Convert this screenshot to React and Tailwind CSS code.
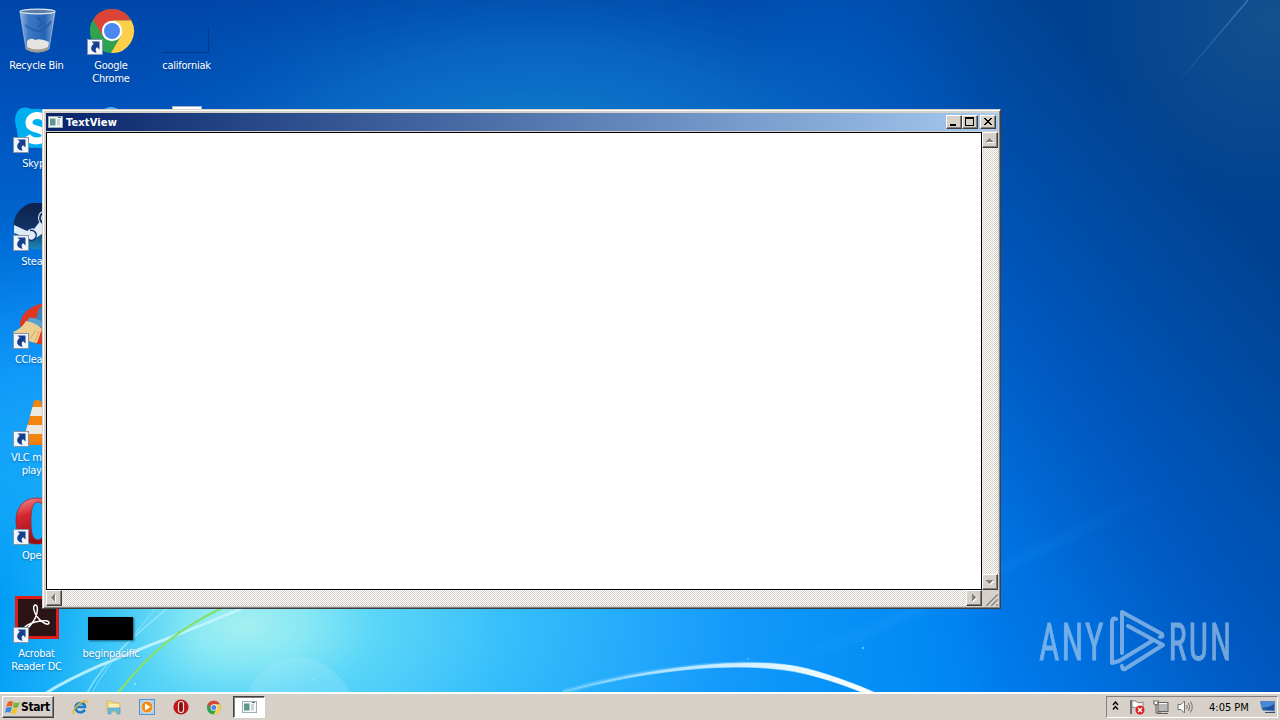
const raised = 'bg-[#d6d0c8] border border-t-white border-l-white border-r-[#404040] border-b-[#404040] shadow-[inset_-1px_-1px_0_#808080]';
const dither = 'bg-[repeating-conic-gradient(#ffffff_0_25%,#d6d0c8_0_50%)] bg-[length:2px_2px]';

function Wallpaper() {
  return (
    <svg className="absolute inset-0" width="1280" height="720" viewBox="0 0 1280 720">
      <defs>
        <linearGradient id="base" x1="0" y1="0" x2="0" y2="692" gradientUnits="userSpaceOnUse">
          <stop offset="0" stopColor="#0046a8" />
          <stop offset="0.15" stopColor="#0052bc" />
          <stop offset="0.35" stopColor="#0068d2" />
          <stop offset="0.65" stopColor="#0094ee" />
          <stop offset="1" stopColor="#00a0fa" />
        </linearGradient>
        <linearGradient id="right" x1="830" y1="650" x2="1300" y2="400" gradientUnits="userSpaceOnUse">
          <stop offset="0" stopColor="#0088f4" />
          <stop offset="0.2" stopColor="#0080f0" />
          <stop offset="0.4" stopColor="#0071e0" />
          <stop offset="0.7" stopColor="#0058c0" />
          <stop offset="1" stopColor="#004494" />
        </linearGradient>
        <linearGradient id="rightFade" x1="740" y1="0" x2="1000" y2="0" gradientUnits="userSpaceOnUse">
          <stop offset="0" stopColor="#fff" stopOpacity="0" />
          <stop offset="1" stopColor="#fff" />
        </linearGradient>
        <mask id="rightMask"><rect width="1280" height="720" fill="url(#rightFade)" /></mask>
        <linearGradient id="dark" x1="920" y1="420" x2="1200" y2="170" gradientUnits="userSpaceOnUse">
          <stop offset="0" stopColor="#0060cc" stopOpacity="0" />
          <stop offset="0.5" stopColor="#0052b2" stopOpacity="0.85" />
          <stop offset="1" stopColor="#004290" />
        </linearGradient>
        <radialGradient id="topGlow" cx="0" cy="0" r="1" gradientTransform="translate(540 150) scale(460 210)" gradientUnits="userSpaceOnUse">
          <stop offset="0" stopColor="#1280d0" />
          <stop offset="0.5" stopColor="#0a6cc4" stopOpacity="0.75" />
          <stop offset="1" stopColor="#0052b0" stopOpacity="0" />
        </radialGradient>
        <radialGradient id="cyan" cx="0" cy="0" r="1" gradientTransform="translate(245 625) scale(760 430)" gradientUnits="userSpaceOnUse">
          <stop offset="0" stopColor="#a4f0f0" />
          <stop offset="0.08" stopColor="#88e8f4" />
          <stop offset="0.17" stopColor="#5cd6f8" />
          <stop offset="0.36" stopColor="#34bdfb" />
          <stop offset="0.65" stopColor="#1499fb" />
          <stop offset="1" stopColor="#0080f0" stopOpacity="0" />
        </radialGradient>
        <linearGradient id="leftBlue" x1="0" y1="600" x2="200" y2="640" gradientUnits="userSpaceOnUse">
          <stop offset="0" stopColor="#009cf6" />
          <stop offset="0.35" stopColor="#10acf6" stopOpacity="0.8" />
          <stop offset="1" stopColor="#50d4f6" stopOpacity="0" />
        </linearGradient>
        <linearGradient id="leftFade" x1="0" y1="330" x2="0" y2="600" gradientUnits="userSpaceOnUse">
          <stop offset="0" stopColor="#fff" stopOpacity="0" />
          <stop offset="1" stopColor="#fff" />
        </linearGradient>
        <mask id="leftMask"><rect width="1280" height="720" fill="url(#leftFade)" /></mask>
        <linearGradient id="arc" x1="560" y1="0" x2="880" y2="0" gradientUnits="userSpaceOnUse">
          <stop offset="0" stopColor="#80d4ff" />
          <stop offset="0.6" stopColor="#d8f2ff" />
          <stop offset="1" stopColor="#fff" />
        </linearGradient>
        <linearGradient id="beam" x1="700" y1="0" x2="1180" y2="0" gradientUnits="userSpaceOnUse">
          <stop offset="0" stopColor="#2aa0ff" stopOpacity="0" />
          <stop offset="0.4" stopColor="#2aa0ff" />
          <stop offset="1" stopColor="#2aa0ff" stopOpacity="0" />
        </linearGradient>
        <linearGradient id="streak" x1="1250" y1="0" x2="1170" y2="85" gradientUnits="userSpaceOnUse">
          <stop offset="0" stopColor="#5088c0" />
          <stop offset="1" stopColor="#5088c0" stopOpacity="0" />
        </linearGradient>
        <radialGradient id="haze" cx="1270" cy="20" r="190" gradientUnits="userSpaceOnUse">
          <stop offset="0" stopColor="#30648c" stopOpacity="0.4" />
          <stop offset="1" stopColor="#30648c" stopOpacity="0" />
        </radialGradient>
        <filter id="soft" x="-20%" y="-20%" width="140%" height="140%"><feGaussianBlur stdDeviation="4" /></filter>
        <filter id="slight" x="-10%" y="-10%" width="120%" height="120%"><feGaussianBlur stdDeviation="0.7" /></filter>
      </defs>
      <rect width="1280" height="720" fill="url(#base)" />
      <rect width="1280" height="720" fill="url(#right)" mask="url(#rightMask)" />
      <rect width="1280" height="720" fill="url(#dark)" mask="url(#rightMask)" />
      <rect width="1280" height="370" fill="url(#topGlow)" />
      <rect width="1280" height="720" fill="url(#cyan)" />
      <rect width="220" height="720" fill="url(#leftBlue)" mask="url(#leftMask)" />
      <rect x="1060" width="220" height="220" fill="url(#haze)" />
      <path d="M1248 0L1180 80" stroke="url(#streak)" strokeWidth="1.5" opacity="0.7" filter="url(#slight)" />
      <path d="M660 706L860 635L1000 570L1180 480" fill="none" stroke="url(#beam)" strokeWidth="9" opacity="0.3" filter="url(#soft)" />
      <path d="M247 694C268 645 325 645 351 694" fill="#b8f0ff" opacity="0.2" />
      <g fill="none" filter="url(#slight)">
        <path d="M46 693C100 660 170 640 245 607" stroke="#c8f6ff" strokeWidth="3" opacity="0.85" />
        <path d="M87 693C105 660 135 635 168 608" stroke="#a8ecff" strokeWidth="1.5" opacity="0.7" />
        <path d="M92 693C112 656 134 638 155 608" stroke="#a8ecff" strokeWidth="1" opacity="0.6" />
        <path d="M118 693C150 652 180 628 222 608" stroke="#84e070" strokeWidth="2.4" />
      </g>
      <path d="M563 692C640 669 750 655 808 671Q842 681 870 693" fill="none" stroke="#90d8ff" strokeWidth="5" opacity="0.35" filter="url(#slight)" />
      <path d="M563 692C640 669 750 654 808 669C838 677 862 687 878 694H866C845 685 826 679 806 674C740 658 638 672 563 692Z" fill="url(#arc)" stroke="url(#arc)" strokeWidth="0.6" filter="url(#slight)" />
      <g fill="#a8e4ff" opacity="0.8">
        <circle cx="863" cy="648" r="1" /><circle cx="748" cy="659" r="0.8" />
        <circle cx="135" cy="684" r="1.2" /><circle cx="259" cy="629" r="1" /><circle cx="314" cy="679" r="1" />
      </g>
    </svg>
  );
}

function Shortcut() {
  return (
    <svg className="absolute left-0 bottom-0" width="16" height="16" viewBox="0 0 16 16">
      <rect x="0.5" y="0.5" width="15" height="15" fill="#f2f6fc" stroke="#8496ac" />
      <path d="M4.5 2.5H12.5V10.5L10.2 8.2C8.4 9 8.2 11 9.6 13.8C5 13.6 1.5 9 6.8 4.8Z" fill="#153f8c" />
    </svg>
  );
}

function ChromeLogo({ size }) {
  return (
    <svg width={size} height={size} viewBox="0 1 48 48">
      <circle cx="25" cy="25" r="22" fill="#2fa352" />
      <path d="M25 25L6 14A22 22 0 0 1 44.3 14.5H25Z" fill="#dc4437" />
      <path d="M44.3 14.5A22 22 0 0 1 24 47L34 30L25 14.5Z" fill="#fcd04a" />
      <path d="M6 14L16 31L25 25L26 14Z" fill="#dc4437" />
      <path d="M6 14L16.4 31L25 35L21 46.5A22 22 0 0 1 6 14Z" fill="#2fa352" />
      <circle cx="25" cy="25" r="10.2" fill="#fff" />
      <circle cx="25" cy="25" r="8" fill="#4a87ee" />
    </svg>
  );
}

function RecycleBin() {
  return (
    <svg width="48" height="48" viewBox="0 0 48 48">
      <defs>
        <linearGradient id="bin">
          <stop stopColor="#c8dcf0" stopOpacity="0.75" />
          <stop offset="0.25" stopColor="#6898d2" stopOpacity="0.6" />
          <stop offset="0.7" stopColor="#3c74bc" stopOpacity="0.6" />
          <stop offset="1" stopColor="#b4cce4" stopOpacity="0.8" />
        </linearGradient>
      </defs>
      <path d="M7 5L13 42Q24 48 36 42L42 5Z" fill="url(#bin)" stroke="#9cbade" strokeWidth="0.8" />
      <path d="M14 34Q18 30 22 33Q28 31 36 35L35 41Q24 46 14 41Z" fill="#e4e4e0" />
      <path d="M14 40Q24 45 35 40L35 43Q24 48 14 43Z" fill="#a09c94" />
      <path d="M12 18Q20 24 26 24Q34 22 38 14M24 10L30 16L25 20" fill="none" stroke="#2058a4" strokeWidth="2" opacity="0.7" />
      <ellipse cx="24.5" cy="4.5" rx="17.5" ry="2.4" fill="#5c7ea8" stroke="#dae4ee" strokeWidth="1.2" />
    </svg>
  );
}

function Skype() {
  return (
    <svg width="48" height="48" viewBox="0 0 48 48">
      <path d="M4 7Q9 0 18 4Q40 2 44 22Q48 40 34 44Q24 42 18 43Q4 38 4 25Q0 14 4 7Z" fill="#00aff0" />
      <path d="M33 16C30 8 17 9 16 17C15 27 33 22 32 31C31 37 18 38 14 31" fill="none" stroke="#fff" strokeWidth="7" />
    </svg>
  );
}

function Steam() {
  return (
    <svg width="48" height="48" viewBox="0 0 48 48">
      <defs>
        <linearGradient id="steam" x2="0" y2="1"><stop stopColor="#10204c" /><stop offset="0.55" stopColor="#103464" /><stop offset="1" stopColor="#1c88bc" /></linearGradient>
      </defs>
      <circle cx="24" cy="23" r="23.5" fill="url(#steam)" />
      <path d="M1 22L14 28Q19 24 21 26L28 17H36V26L23 35Q18 41 12 34L1 30Z" fill="#e0ebfa" />
      <path d="M14 35A5 5 0 1 0 17 27.5" fill="none" stroke="#10346a" strokeWidth="1.5" />
      <circle cx="33" cy="15" r="8" fill="#e0ebfa" />
      <circle cx="33" cy="15" r="6" fill="none" stroke="#10346a" strokeWidth="2" />
    </svg>
  );
}

function CCleaner() {
  return (
    <svg width="48" height="48" viewBox="0 0 48 48">
      <path d="M32 2Q10 6 7 22Q8 42 32 44V2Z" fill="#dc3822" />
      <path d="M26 8L32 2V24L21 24Z" fill="#3c84bc" />
      <path d="M16 17Q22 16 32 22V28Q22 24 14 21Z" fill="#58a2d2" />
      <path d="M13 20Q24 22 29 28L24 42Q10 40 0 31Q8 28 13 20Z" fill="#ecce90" />
      <path d="M17 38L23 29M22 40L26 30" stroke="#d4a868" />
    </svg>
  );
}

function Vlc() {
  return (
    <svg width="48" height="48" viewBox="0 0 48 48">
      <path d="M8 32H42L46 46H4Z" fill="#ec7c0c" />
      <path d="M21 2Q24 0 28 2L38 40Q24 46 11 40Z" fill="#f28410" />
      <path d="M19.5 8H29.5L31 17H17Z" fill="#eee9e0" />
      <path d="M14.5 26H34L36 35H12Z" fill="#eee9e0" />
    </svg>
  );
}

function Opera() {
  return (
    <svg width="48" height="48" viewBox="0 0 48 48">
      <defs><linearGradient id="opera" x2="0.3" y2="1"><stop stopColor="#f49496" /><stop offset="0.4" stopColor="#d42830" /><stop offset="1" stopColor="#980c14" /></linearGradient></defs>
      <path fillRule="evenodd" d="M24 1C10 1 3 11 3 24S10 47 24 47S45 37 45 24S38 1 24 1ZM25 5C31 5 32 15 32 24S31 43 25 43S18 34 18 24S19 5 25 5Z" fill="url(#opera)" stroke="#a81820" strokeWidth="0.7" />
    </svg>
  );
}

function Acrobat() {
  return (
    <svg width="48" height="48" viewBox="0 0 48 48">
      <rect x="2" y="1" width="44" height="43" fill="#e01c14" />
      <rect x="5" y="4" width="38" height="37" fill="#2a1416" />
      <path d="M22 10C26 9 25 21 19 28C14 35 10 36 12 32C17 27 36 23 36 28C35 32 25 25 22 18C20 13 20 11 22 10Z" fill="none" stroke="#fff" strokeWidth="1.5" />
    </svg>
  );
}

function DesktopIcon({ label, shortcut, children }) {
  return (
    <div className="flex flex-col items-center pt-[7px]">
      <div className="relative w-12 h-12">
        {children}
        {shortcut && <Shortcut />}
      </div>
      <p className="mt-1 w-[74px] text-center text-[11px] leading-[13px] tracking-[-0.25px] text-white whitespace-pre [text-shadow:0_1px_2px_#00307080]">{label}</p>
    </div>
  );
}

function Desktop() {
  return (
    <div className="relative grid grid-flow-col grid-cols-[73px_76px_75px] grid-rows-[repeat(7,98px)] h-[692px] w-[224px]">
      <DesktopIcon label="Recycle Bin"><RecycleBin /></DesktopIcon>
      <DesktopIcon label="Skype" shortcut><Skype /></DesktopIcon>
      <DesktopIcon label="Steam" shortcut><Steam /></DesktopIcon>
      <DesktopIcon label="CCleaner" shortcut><CCleaner /></DesktopIcon>
      <DesktopIcon label={'VLC media\nplayer'} shortcut><Vlc /></DesktopIcon>
      <DesktopIcon label="Opera" shortcut><Opera /></DesktopIcon>
      <DesktopIcon label={'Acrobat\nReader DC'} shortcut><Acrobat /></DesktopIcon>
      <DesktopIcon label={'Google\nChrome'} shortcut><ChromeLogo size={48} /></DesktopIcon>
      <div className="flex justify-center pt-[9px]"><div className="w-6 h-6 rounded-full bg-[#58acec]" /></div>
      <div className="row-span-4" />
      <DesktopIcon label="beginpacific">
        <div className="pt-[22px]"><div className="h-[23px] w-[45px] ml-px bg-black shadow-[1px_1px_2px_#145a80]" /></div>
      </DesktopIcon>
      <DesktopIcon label="californiak">
        <div className="pt-[22px]"><div className="h-[24px] w-[46px] border-r border-b border-[#003a88]" /></div>
      </DesktopIcon>
      <div className="flex justify-center pt-[8px]"><div className="w-[30px] h-8 bg-white border border-[#9eb4cc]" /></div>
    </div>
  );
}

function AppIcon({ className }) {
  return (
    <svg className={className} width="15" height="12" viewBox="0 0 15 12">
      <rect x="0.5" y="0.5" width="14" height="11" fill="#f4f8f8" stroke="#9cb0b8" />
      <rect x="2" y="2.5" width="5.5" height="7" fill="#5c988c" />
      <rect x="9" y="3" width="3" height="6.5" fill="#d0d4d4" />
      <path d="M10 1.5h3" stroke="#4a6478" />
    </svg>
  );
}

function CaptionButton({ children, className = '' }) {
  return (
    <button className={`${raised} w-4 h-[14px] ${className}`}>
      <svg width="14" height="12" viewBox="0 0 14 12" shapeRendering="crispEdges">{children}</svg>
    </button>
  );
}

function ScrollButton({ d }) {
  return (
    <button className={`${raised} w-4 h-4 shrink-0`}>
      <svg width="14" height="14" viewBox="0 0 14 14" shapeRendering="crispEdges">
        <path d={d} fill="#fff" transform="translate(1 1)" />
        <path d={d} fill="#808080" />
      </svg>
    </button>
  );
}

function TextViewWindow() {
  return (
    <div className="absolute left-[42px] top-[109px] w-[959px] h-[500px] bg-[#d6d0c8] border border-t-[#d6d0c8] border-l-[#d6d0c8] border-r-[#404040] border-b-[#404040] shadow-[inset_1px_1px_0_#fff,inset_-1px_-1px_0_#808080] p-[3px] pr-[2px]">
      <div className="flex items-center h-[18px] w-[952px] px-[2px] bg-linear-to-r from-[#0a246a] to-[#a6caf0]">
        <AppIcon />
        <span className="ml-[3px] flex-1 text-[11px] font-bold leading-none text-white tracking-[0.15px]">TextView</span>
        <CaptionButton><path d="M3 8h6v2H3z" /></CaptionButton>
        <CaptionButton><path fillRule="evenodd" d="M2 1h9v9H2zM3 3v6h7V3z" /></CaptionButton>
        <CaptionButton className="ml-[2px]"><path d="M3 2h2v1h1v1h2V3h1V2h2v1h-1v1H9v1H8v1h1v1h1v1h1v1H9V8H8V7H6v1H5v1H3V8h1V7h1V6h1V5H5V4H4V3H3z" /></CaptionButton>
      </div>
      <div className="mt-px flex h-[458px]">
        <div className="w-[936px] bg-white border border-black" />
        <div className={`w-4 flex flex-col justify-between ${dither}`}>
          <ScrollButton d="M6 5h1v1h1v1h1v1h1v1H3V8h1V7h1V6h1z" />
          <ScrollButton d="M3 5h7v1H9v1H8v1H7v1H6V8H5V7H4V6H3z" />
        </div>
      </div>
      <div className="flex h-4 w-[952px]">
        <div className={`w-[936px] flex justify-between ${dither}`}>
          <ScrollButton d="M8 3v7H7V9H6V8H5V7H4V6h1V5h1V4h1V3z" />
          <ScrollButton d="M5 3h1v1h1v1h1v1h1v1H8v1H7v1H6v1H5z" />
        </div>
        <svg width="16" height="16" viewBox="0 0 16 16" fill="none">
          <path d="M3 16L16 3M8 16L16 8M13 16L16 13" stroke="#fff" />
          <path d="M4 16L16 4M9 16L16 9M14 16L16 14" stroke="#808080" strokeWidth="1.5" />
        </svg>
      </div>
    </div>
  );
}

function Watermark() {
  return (
    <svg className="absolute left-[1030px] top-[590px]" width="240" height="100" viewBox="1030 590 240 100" opacity="0.58">
      <g fill="#c6dbef" stroke="#c6dbef" strokeWidth="0.8" fontFamily="Roboto, sans-serif" fontSize="52" letterSpacing="3">
        <text transform="translate(1039 659.5) scale(0.68 1)">ANY</text>
        <text transform="translate(1168.5 659.5) scale(0.66 1)">RUN</text>
      </g>
      <g fill="none" stroke="#c6dbef" strokeWidth="4" strokeLinejoin="round" strokeLinecap="round">
        <path d="M1116 619Q1112 617 1112 622V663L1119 661L1152 641" />
        <path d="M1122 653V612L1162 634Q1164 637 1160 637" />
        <path d="M1128 626L1163 645L1125 669Q1122 670 1122 666" />
      </g>
    </svg>
  );
}

function StartFlag() {
  return (
    <svg width="16" height="15" viewBox="0 0 16 15">
      <path d="M3 2Q6 0 8 2L7 7Q4 5 1 7Z" fill="#e86028" />
      <path d="M9 2Q12 4 15 2L13 7Q10 9 8 7Z" fill="#74b438" />
      <path d="M1 8Q4 6 7 8L5 13Q3 11 0 13Z" fill="#3c8cdc" />
      <path d="M8 8Q10 10 13 8L11 13Q9 15 6 13Z" fill="#f8c42c" />
    </svg>
  );
}

function QuickLaunch() {
  return (
    <div className="ml-[18px] flex items-center gap-[17.5px]">
      <svg width="16" height="16" viewBox="0 0 16 16" fill="none">
        <path d="M13 11Q8 16 4 11Q2 5 8 4Q13 4 13 8H4" stroke="#1680cc" strokeWidth="2.6" />
        <path d="M2 15Q-1 12 7 5Q16-1 15 4" stroke="#ecb830" strokeWidth="1.5" />
      </svg>
      <svg width="16" height="16" viewBox="0 0 16 16">
        <path d="M1 4V2H6L7 4H14V13H1Z" fill="#f2da82" stroke="#d0b258" strokeWidth="0.7" />
        <path d="M3 5H13V9H3Z" fill="#fbeeb0" />
        <path d="M2 15V9H14V15H11V12H5V15Z" fill="#6cbade" stroke="#4c9cc8" strokeWidth="0.6" />
      </svg>
      <svg width="16" height="16" viewBox="0 0 16 16">
        <rect x="0.5" y="0.5" width="15" height="15" fill="#a8d0f0" stroke="#5494cc" />
        <circle cx="8" cy="8" r="6" fill="#f48c18" stroke="#fff" strokeWidth="0.6" />
        <path d="M6 4.5L11.5 8L6 11.5Z" fill="#fff" />
      </svg>
      <svg width="16" height="16" viewBox="0 0 16 16">
        <circle cx="8" cy="8" r="7.6" fill="#c01818" />
        <rect x="5.5" y="2.5" width="5" height="11" rx="2.5" fill="#841010" stroke="#f4dcdc" strokeWidth="1.2" />
      </svg>
      <ChromeLogo size={15} />
    </div>
  );
}

function Tray() {
  return (
    <div className="ml-auto mr-[2px] flex items-center h-[22px] w-[172px] pl-[5px] border border-t-[#808080] border-l-[#808080] border-r-white border-b-white">
      <svg width="8" height="12" viewBox="0 0 8 12" fill="none" stroke="#000" strokeWidth="1.4">
        <path d="M1 4L3.5 1L6 4M1 8.5L3.5 5.5L6 8.5" />
      </svg>
      <svg className="ml-[9px]" width="17" height="16" viewBox="0 0 17 16">
        <path d="M2 1V15" stroke="#707070" strokeWidth="2" />
        <path d="M3 2Q6 1 8 3T14 3V9Q11 9 9 9T3 8Z" fill="#fff" stroke="#808080" />
        <circle cx="11" cy="11" r="4.5" fill="#d82424" />
        <path d="M9 9L13 13M13 9L9 13" stroke="#fff" strokeWidth="1.4" />
      </svg>
      <svg className="ml-[7px]" width="17" height="16" viewBox="0 0 17 16">
        <rect x="5" y="3.5" width="10" height="9" fill="#b8b8b8" stroke="#646464" />
        <path d="M6 4.5H14" stroke="#fff" />
        <path d="M4 14.5H15M3 6V14H8" fill="none" stroke="#606060" />
        <path d="M1 1V5Q3 7 5 5V1M3 1V3" fill="#fff" stroke="#505050" />
      </svg>
      <svg className="ml-[7px]" width="17" height="16" viewBox="0 0 17 16" fill="none" stroke="#707070">
        <path d="M1 5.5H4L7.5 2V14L4 10.5H1Z" fill="#fff" />
        <path d="M9.5 6Q11 8 9.5 10M11.5 4Q14 8 11.5 12M13.5 2.5Q17 8 13.5 13.5" />
      </svg>
      <span className="ml-[15px] w-[44px] text-[11px] leading-none text-black whitespace-nowrap">4:05 PM</span>
      <svg className="ml-[7px]" width="16" height="14" viewBox="0 0 16 14">
        <path d="M0.5 1.5H14.5V11L2.5 10Z" fill="#1c50a0" stroke="#5484c0" />
        <path d="M1 2H14V4Q8 8 2 8Z" fill="#4888d4" />
        <path d="M5 12.5H15" stroke="#384c70" />
      </svg>
    </div>
  );
}

function Taskbar() {
  return (
    <div className="relative flex items-center h-7 bg-[#d6d0c8] border-t-2 border-t-white">
      <button className={`${raised} ml-[2px] flex items-center w-[52px] h-[22px] pl-[2px] text-[12px] font-bold text-black tracking-[-0.4px]`}>
        <StartFlag />
        Start
      </button>
      <QuickLaunch />
      <div className="ml-[12px] flex items-center justify-center w-[32px] h-[22px] bg-white border border-t-[#404040] border-l-[#404040] border-r-white border-b-white shadow-[inset_1px_1px_0_#808080]">
        <AppIcon />
      </div>
      <Tray />
    </div>
  );
}

export default function App() {
  return (
    <div className="relative w-[1280px] h-[720px] overflow-hidden font-['DejaVu_Sans_Condensed','DejaVu_Sans',sans-serif] [font-stretch:condensed]">
      <Wallpaper />
      <Desktop />
      <TextViewWindow />
      <Watermark />
      <Taskbar />
    </div>
  );
}
